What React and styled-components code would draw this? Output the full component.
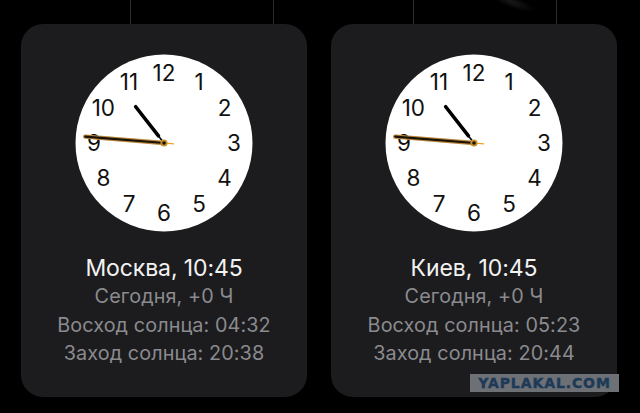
import React from "react";
import styled, { createGlobalStyle } from "styled-components";

const Global = createGlobalStyle`
  html, body { margin: 0; padding: 0; background: #000; }
  body { width: 640px; height: 413px; overflow: hidden; font-family: Inter, "Noto Sans", sans-serif; }
`;

const Page = styled.div`
  position: relative;
  width: 640px;
  height: 413px;
  background: #000;
  display: flex;
  flex-direction: column;
`;

const Strip = styled.div`
  position: relative;
  height: 24px;
  display: flex;
  flex-shrink: 0;
`;

const Wire = styled.div`
  width: 1px;
  height: 100%;
  margin-left: ${(p) => p.$gap}px;
  background: #2c2c2e;
`;

const Smudge = styled.div`
  position: absolute;
  left: 488px;
  top: -4px;
  width: 48px;
  height: 12px;
  border-radius: 50%;
  background: radial-gradient(ellipse at center, rgba(70, 70, 70, 0.35), rgba(30, 30, 30, 0) 70%);
  transform: rotate(20deg);
`;

const Row = styled.div`
  display: flex;
  gap: 24px;
  padding-left: 21px;
`;

const Card = styled.div`
  width: 286px;
  height: 373px;
  box-sizing: border-box;
  padding-top: 30px;
  border-radius: 22px;
  background: #1c1c1e;
  display: flex;
  flex-direction: column;
  align-items: center;
`;

const Face = styled.svg`
  display: block;
  width: 178px;
  height: 178px;
  flex-shrink: 0;
`;

const Info = styled.div`
  margin-top: 22px;
  display: flex;
  flex-direction: column;
  align-items: center;
`;

const Title = styled.div`
  color: #f2f2f2;
  font-size: 23px;
  line-height: 28px;
  letter-spacing: -0.1px;
`;

const Detail = styled.div`
  color: #8b8b8f;
  font-size: 19.8px;
  line-height: 28.5px;
  letter-spacing: 0.1px;
`;

const Badge = styled.div`
  position: absolute;
  left: 470px;
  top: 374px;
  width: 149px;
  height: 18px;
  background: #6d7074;
  display: flex;
  align-items: center;
  justify-content: center;
  color: #1d3a58;
  font-family: "DejaVu Sans", sans-serif;
  font-weight: 700;
  font-size: 14px;
  letter-spacing: 0.9px;
  -webkit-text-stroke: 0.4px #1d3a58;
`;

const C = 89;
const NUMBERS = [12, 1, 2, 3, 4, 5, 6, 7, 8, 9, 10, 11];

function polar(angleDeg, r) {
  const a = (angleDeg * Math.PI) / 180;
  return [C + r * Math.sin(a), C - r * Math.cos(a)];
}

function ClockFace() {
  const [hx, hy] = polar(322, 46);
  const [hx0, hy0] = polar(322, 9);
  const [mx, my] = polar(274.6, 79);
  const [tx, ty] = polar(94.6, 10);
  return (
    <Face viewBox="0 0 178 178">
      <circle cx={C} cy={C} r={88.5} fill="#fff" />
      {NUMBERS.map((n, i) => {
        const [x, y] = polar(i * 30, 70);
        return (
          <text
            key={n}
            x={x}
            y={y + 8}
            textAnchor="middle"
            fontFamily="Inter, 'Noto Sans', sans-serif"
            fontSize="22.5"
            fill="#111"
          >
            {n}
          </text>
        );
      })}
      {/* hour hand */}
      <line x1={C} y1={C} x2={hx0} y2={hy0} stroke="#000" strokeWidth="1.6" />
      <line x1={hx0} y1={hy0} x2={hx} y2={hy} stroke="#000" strokeWidth="3.6" strokeLinecap="round" />
      {/* minute hand with the second hand over it */}
      <line x1={C} y1={C} x2={mx} y2={my} stroke="#b8863a" strokeWidth="4.4" strokeLinecap="round" />
      <line x1={C} y1={C} x2={mx} y2={my} stroke="#1a1208" strokeWidth="2.2" strokeLinecap="round" />
      <line x1={C} y1={C} x2={tx} y2={ty} stroke="#f0a020" strokeWidth="1.2" />
      <circle cx={C} cy={C} r={3.6} fill="#c8902a" />
      <circle cx={C} cy={C} r={1.8} fill="#1a1208" />
    </Face>
  );
}

const CITIES = [
  { name: "Москва", rise: "04:32", set: "20:38" },
  { name: "Киев", rise: "05:23", set: "20:44" },
];

export default function App() {
  return (
    <>
      <Global />
      <Page>
        <Strip>
          <Wire $gap={130} />
          <Wire $gap={142} />
          <Wire $gap={139} />
          <Wire $gap={142} />
          <Smudge />
        </Strip>
        <Row>
          {CITIES.map((c) => (
            <Card key={c.name}>
              <ClockFace />
              <Info>
                <Title>{c.name}, 10:45</Title>
                <Detail>Сегодня, +0 Ч</Detail>
                <Detail>Восход солнца: {c.rise}</Detail>
                <Detail>Заход солнца: {c.set}</Detail>
              </Info>
            </Card>
          ))}
        </Row>
        <Badge>YAPLAKAL.COM</Badge>
      </Page>
    </>
  );
}
